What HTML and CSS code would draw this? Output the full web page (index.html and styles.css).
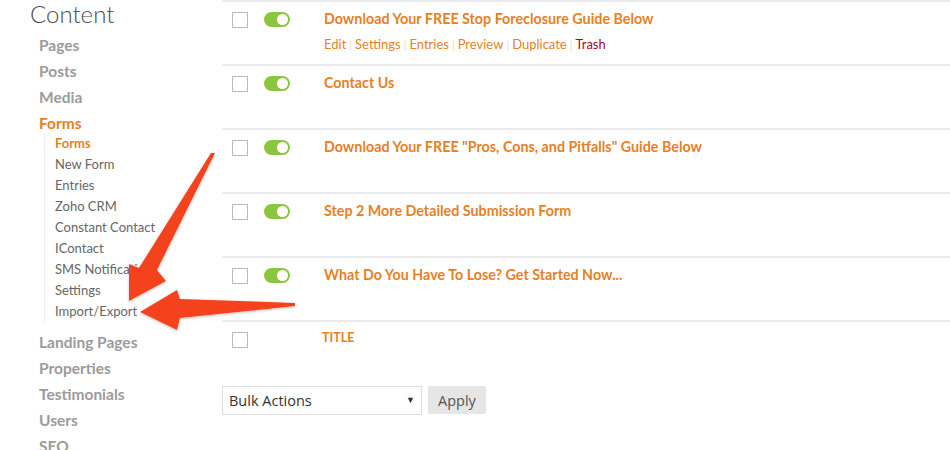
FILE: index.html
```html
<!DOCTYPE html>
<html lang="en">
<head>
<meta charset="UTF-8">
<meta name="viewport" content="width=device-width, initial-scale=1.0">
<title>Forms</title>
<link rel="stylesheet" href="styles.css">
</head>
<body>
  <div class="layout">
    <div class="sidebar">
      <h2 class="side-title">Content</h2>
      <ul class="nav">
        <li><a href="#">Pages</a></li>
        <li><a href="#">Posts</a></li>
        <li><a href="#">Media</a></li>
        <li class="active"><a href="#">Forms</a>
          <ul class="subnav">
            <li class="active"><a href="#">Forms</a></li>
            <li><a href="#">New Form</a></li>
            <li><a href="#">Entries</a></li>
            <li><a href="#">Zoho CRM</a></li>
            <li><a href="#">Constant Contact</a></li>
            <li><a href="#">IContact</a></li>
            <li><a href="#">SMS Notifications</a></li>
            <li><a href="#">Settings</a></li>
            <li><a href="#">Import/Export</a></li>
          </ul>
        </li>
        <li><a href="#">Landing Pages</a></li>
        <li><a href="#">Properties</a></li>
        <li><a href="#">Testimonials</a></li>
        <li><a href="#">Users</a></li>
        <li><a href="#">SEO</a></li>
      </ul>
    </div>

    <div class="main">
      <div class="form-list">
        <div class="form-row">
          <input type="checkbox" class="check">
          <span class="toggle on"></span>
          <div class="form-info">
            <a href="#" class="form-title">Download Your FREE Stop Foreclosure Guide Below</a>
            <div class="row-actions">
              <a href="#">Edit</a><span class="sep">|</span><a href="#">Settings</a><span class="sep">|</span><a href="#">Entries</a><span class="sep">|</span><a href="#">Preview</a><span class="sep">|</span><a href="#">Duplicate</a><span class="sep">|</span><a href="#" class="trash">Trash</a>
            </div>
          </div>
        </div>
        <div class="form-row">
          <input type="checkbox" class="check">
          <span class="toggle on"></span>
          <div class="form-info">
            <a href="#" class="form-title">Contact Us</a>
          </div>
        </div>
        <div class="form-row">
          <input type="checkbox" class="check">
          <span class="toggle on"></span>
          <div class="form-info">
            <a href="#" class="form-title">Download Your FREE "Pros, Cons, and Pitfalls" Guide Below</a>
          </div>
        </div>
        <div class="form-row">
          <input type="checkbox" class="check">
          <span class="toggle on"></span>
          <div class="form-info">
            <a href="#" class="form-title">Step 2 More Detailed Submission Form</a>
          </div>
        </div>
        <div class="form-row">
          <input type="checkbox" class="check">
          <span class="toggle on"></span>
          <div class="form-info">
            <a href="#" class="form-title">What Do You Have To Lose? Get Started Now...</a>
          </div>
        </div>
        <div class="form-row last">
          <input type="checkbox" class="check">
          <div class="form-info head">
            <span class="col-title">TITLE</span>
          </div>
        </div>
      </div>

      <div class="bulk">
        <div class="select-wrap">
          <select class="bulk-select">
            <option>Bulk Actions</option>
            <option>Delete</option>
          </select>
        </div>
        <button class="apply">Apply</button>
      </div>
    </div>
  </div>

  <!-- annotation arrows drawn on top of the screenshot -->
  <svg class="arrows" width="950" height="450" viewBox="0 0 950 450">
    <defs>
      <filter id="shadow" x="-20%" y="-20%" width="140%" height="140%">
        <feDropShadow dx="0" dy="1" stdDeviation="1.5" flood-color="#000" flood-opacity="0.25"/>
      </filter>
    </defs>
    <polygon filter="url(#shadow)" fill="#f4431f"
      points="215,153 157,270 166,281 129,301 129,264 139,268 211,153"/>
    <polygon filter="url(#shadow)" fill="#f4431f"
      points="295,303 180,299 177,290 140,312 177,330 180,318 295,306"/>
  </svg>
</body>
</html>
```

FILE: styles.css
```css
body {
  margin: 0;
  font-family: Lato, "Liberation Sans", sans-serif;
  background: #fff;
  overflow: hidden;
}
a {
  text-decoration: none;
}
.layout {
  display: flex;
  align-items: flex-start;
}

/* sidebar */
.sidebar {
  width: 192px;
  padding-left: 30px;
  flex-shrink: 0;
}
.side-title {
  margin: 0;
  font-size: 24px;
  font-weight: 300;
  line-height: 28px;
  color: #4a4a4a;
}
.nav {
  list-style: none;
  margin: 4px 0 0;
  padding: 0 0 0 9px;
}
.nav > li > a {
  display: block;
  line-height: 26px;
  font-size: 15.5px;
  font-weight: 700;
  color: #9b9b9b;
}
.nav > li.active > a {
  color: #e8801f;
}
.subnav {
  list-style: none;
  margin: -3px 0 7px 5px;
  padding: 0 0 0 10px;
  border-left: 1px solid #ececec;
}
.subnav li a {
  display: block;
  line-height: 21px;
  font-size: 13px;
  color: #666;
  white-space: nowrap;
}
.subnav li.active a {
  color: #e8801f;
  font-weight: 700;
}

/* form list */
.main {
  flex: 1;
}
.form-row {
  display: flex;
  align-items: flex-start;
  height: 62px;
  border-top: 2px solid #ececec;
  padding-left: 10px;
}
.check {
  appearance: none;
  -webkit-appearance: none;
  width: 16px;
  height: 16px;
  margin: 10px 16px 0 0;
  border: 1px solid #bbb;
  background: #fff;
}
.toggle {
  position: relative;
  width: 26px;
  height: 15px;
  margin-top: 10px;
  border-radius: 8px;
  background: #8cc63f;
}
.toggle::after {
  content: "";
  position: absolute;
  right: 2px;
  top: 2px;
  width: 11px;
  height: 11px;
  border-radius: 50%;
  background: #fff;
}
.form-info {
  margin-left: 34px;
  padding-top: 8px;
}
.form-info.head {
  margin-left: 58px;
  padding-top: 4px;
}
.form-title {
  display: block;
  font-size: 14.3px;
  font-weight: 700;
  line-height: 18px;
  color: #e8801f;
}
.col-title {
  font-size: 12.5px;
  font-weight: 700;
  line-height: 16px;
  color: #e8801f;
}
.row-actions {
  margin-top: 7px;
  font-size: 13px;
  line-height: 18px;
}
.row-actions a {
  color: #e8801f;
}
.row-actions a.trash {
  color: #a5001e;
}
.sep {
  color: #ddd;
  margin: 0 3px;
  font-size: 11px;
}

/* bulk actions */
.bulk {
  display: flex;
  gap: 6px;
  margin-top: 2px;
}
.select-wrap {
  position: relative;
}
.select-wrap::after {
  content: "\25BC";
  position: absolute;
  right: 7px;
  top: 8px;
  font-size: 9px;
  color: #333;
  pointer-events: none;
}
.bulk-select {
  appearance: none;
  -webkit-appearance: none;
  width: 200px;
  height: 29px;
  padding: 0 6px;
  border: 1px solid #ddd;
  border-radius: 0;
  background: #fff;
  font-family: "Open Sans", sans-serif;
  font-size: 14.5px;
  color: #333;
}
.apply {
  height: 28px;
  padding: 0 10px;
  border: none;
  border-radius: 2px;
  background: #e6e6e6;
  font-family: "Open Sans", sans-serif;
  font-size: 14.5px;
  color: #555;
}

.arrows {
  position: absolute;
  left: 0;
  top: 0;
  pointer-events: none;
}
```
